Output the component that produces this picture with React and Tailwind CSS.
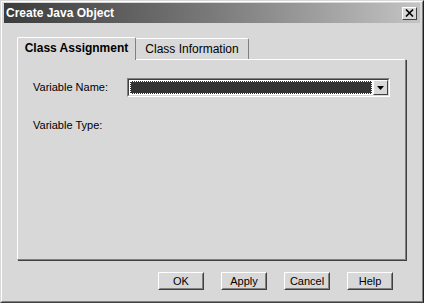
import React from 'react';

const font = { fontFamily: '"Liberation Sans", Arial, sans-serif' };

function Button({ label }) {
  return (
    <div className="w-[46px] h-[18px] border border-t-white border-l-white border-r-[#404040] border-b-[#404040] bg-[#d8d8d8]">
      <div className="h-full border border-transparent border-r-[#808080] border-b-[#808080] flex items-center justify-center text-[11px] text-black leading-none">
        {label}
      </div>
    </div>
  );
}

export default function App() {
  return (
    <div style={font} className="w-[424px] h-[303px] bg-[#d8d8d8] border border-t-[#d8d8d8] border-l-[#d8d8d8] border-r-[#202020] border-b-[#404040]">
      <div className="h-full flex flex-col border border-t-white border-l-white border-r-[#808080] border-b-[#808080] px-[2px] pt-px">
        <div className="h-[20px] flex items-center justify-between pl-[2px] pr-[3px] bg-gradient-to-r from-[#3c3c3c] via-[#7a7a7a] to-[#c4c4c4]">
          <span className="text-white font-bold text-[12px] leading-none">Create Java Object</span>
          <div className="w-[15px] h-[13px] bg-[#d8d8d8] border border-t-white border-l-white border-r-[#404040] border-b-[#404040] flex items-center justify-center">
            <svg width="9" height="8" viewBox="0 0 9 8">
              <path d="M1 0.5 L8 7.5 M8 0.5 L1 7.5" stroke="#000" strokeWidth="1.6" />
            </svg>
          </div>
        </div>

        <div className="flex-1 flex flex-col px-[13px] pt-[13px]">
          <div className="flex items-end h-[23px] relative z-10">
            <div className="w-[119px] h-[23px] bg-[#d8d8d8] border-l border-t border-r border-l-white border-t-white border-r-[#808080] rounded-t-[2px] flex items-center justify-center mb-[-1px] pb-[2px]">
              <span className="font-bold text-[12px] text-black">Class Assignment</span>
            </div>
            <div className="w-[113px] h-[21px] bg-[#d8d8d8] border-t border-r border-t-white border-r-[#808080] rounded-tr-[2px] flex items-center justify-center">
              <span className="text-[12px] text-black">Class Information</span>
            </div>
          </div>
          <div className="w-[389px] h-[201px] border border-t-white border-l-white border-r-[#808080] border-b-[#808080] shadow-[1px_1px_0_#404040] px-[15px] pt-[18px]">
            <div className="flex items-center h-[19px]">
              <span className="w-[94px] text-[11px] text-black">Variable Name:</span>
              <div className="w-[263px] h-[19px] border border-t-[#808080] border-l-[#808080] border-r-white border-b-white">
                <div className="h-full flex border border-t-[#404040] border-l-[#404040] border-r-[#d8d8d8] border-b-[#d8d8d8] bg-white">
                  <div className="flex-1 m-px bg-[#333333] border border-dotted border-white"></div>
                  <div className="w-[15px] h-[15px] bg-[#d8d8d8] border border-t-white border-l-white border-r-[#404040] border-b-[#404040] flex items-center justify-center">
                    <svg width="7" height="4" viewBox="0 0 7 4">
                      <path d="M0 0 H7 L3.5 4 Z" fill="#000" />
                    </svg>
                  </div>
                </div>
              </div>
            </div>
            <div className="mt-[20px] text-[11px] text-black">Variable Type:</div>
          </div>
        </div>

        <div className="flex justify-end gap-[17px] pr-[27px] pb-[11px]">
          <Button label="OK" />
          <Button label="Apply" />
          <Button label="Cancel" />
          <Button label="Help" />
        </div>
      </div>
    </div>
  );
}
